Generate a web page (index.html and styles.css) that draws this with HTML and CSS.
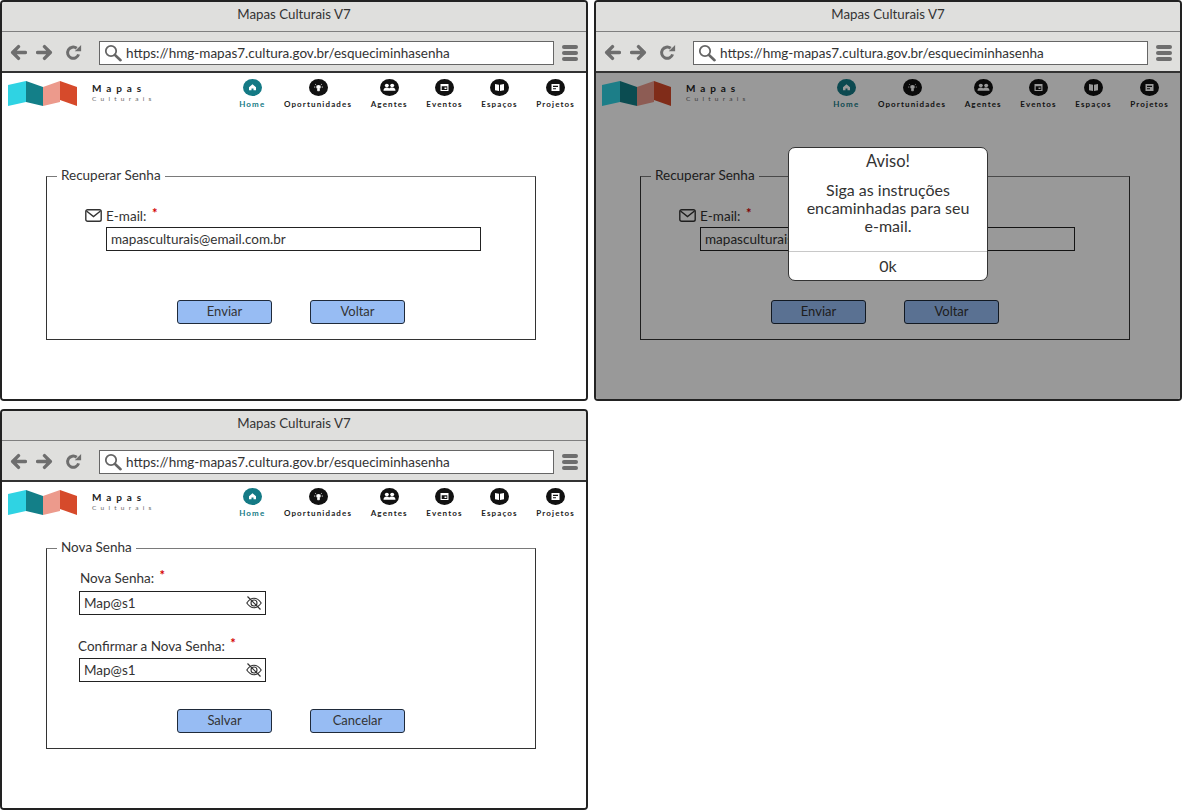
FILE: index.html
```html
<!DOCTYPE html>
<html>
<head lang="pt-BR">
    <meta charset="UTF-8">
    <title>Mapas Culturais V7</title>
    <link rel="stylesheet" href="styles.css">
</head>
<body>
<svg class="sprites" xmlns="http://www.w3.org/2000/svg">
    <symbol id="i-back" viewBox="0 0 16 16"><path d="M14.5 8H3M8 2.5 2.5 8 8 13.5" fill="none" stroke="currentColor" stroke-width="3.2" stroke-linecap="round" stroke-linejoin="round"/></symbol>
    <symbol id="i-forward" viewBox="0 0 16 16"><path d="M1.5 8H13M8 2.500 13.500 8 8 13.500" fill="none" stroke="currentColor" stroke-width="3.2" stroke-linecap="round" stroke-linejoin="round"/></symbol>
    <symbol id="i-reload" viewBox="0 0 16 16"><path d="M12.800 9.800A5.300 5.300 0 1 1 11 4" fill="none" stroke="currentColor" stroke-width="2.800"/><path d="M9.200 6.800h6V1z" fill="currentColor"/></symbol>
    <symbol id="i-search" viewBox="0 0 18 18"><circle cx="7" cy="7" r="5.200" fill="none" stroke="currentColor" stroke-width="1.800"/><path d="M11 11l5.500 5.200" stroke="currentColor" stroke-width="2.600" stroke-linecap="round"/></symbol>
    <symbol id="i-home" viewBox="0 0 19 19" preserveAspectRatio="none"><circle cx="9.500" cy="9.500" r="9.500" fill="currentColor"/><path d="M9.500 6 13 9.200v3.300h-2.500v-2h-2v2H6V9.200z" fill="#fff"/></symbol>
    <symbol id="i-bulb" viewBox="0 0 19 19" preserveAspectRatio="none"><circle cx="9.500" cy="9.500" r="9.500" fill="currentColor"/><circle cx="9.500" cy="9" r="2.300" fill="#fff"/><path d="M8.600 11h1.800v2.200H8.600zM5 9h1.300M12.700 9H14M6.200 5.800l1 1M12.800 5.800l-1 1" stroke="#fff" stroke-width=".8" fill="#fff"/></symbol>
    <symbol id="i-people" viewBox="0 0 19 19" preserveAspectRatio="none"><circle cx="9.500" cy="9.500" r="9.500" fill="currentColor"/><circle cx="6.800" cy="7.300" r="2" fill="#fff"/><circle cx="12.200" cy="7.300" r="2" fill="#fff"/><path d="M3.500 13c0-2.400 1.500-3.400 3.300-3.400 1 0 1.800.3 2.400.9.600-.6 1.500-.9 3-.9 1.800 0 3.300 1 3.300 3.400z" fill="#fff"/></symbol>
    <symbol id="i-calendar" viewBox="0 0 19 19" preserveAspectRatio="none"><circle cx="9.500" cy="9.500" r="9.500" fill="currentColor"/><path d="M5.500 5.500h8v8h-8zM6.700 8.200v4.100h5.600V8.200z" fill="#fff" fill-rule="evenodd"/><path d="M9.500 9.500h2v1.800h-2z" fill="#fff"/></symbol>
    <symbol id="i-map" viewBox="0 0 19 19" preserveAspectRatio="none"><circle cx="9.500" cy="9.500" r="9.500" fill="currentColor"/><path d="M5 5.500 9 6.300V13.500l-4-.8zM10 6.300l4-.8V12.700l-4 .8z" fill="#fff"/></symbol>
    <symbol id="i-project" viewBox="0 0 19 19" preserveAspectRatio="none"><circle cx="9.500" cy="9.500" r="9.500" fill="currentColor"/><path d="M5.500 5.500h8v8h-8zM7 7.500V9h5V7.500zM7 10.300v1.200h3v-1.200z" fill="#fff" fill-rule="evenodd"/></symbol>
    <symbol id="i-mail" viewBox="0 0 17 13"><rect x=".8" y=".8" width="15.400" height="11.400" rx="1.800" fill="none" stroke="currentColor" stroke-width="1.400"/><path d="M1.500 2 8.500 7.500 15.500 2" fill="none" stroke="currentColor" stroke-width="1.400"/></symbol>
    <symbol id="i-eye" viewBox="0 0 16 16"><path d="M.8 8C3 4.800 5.300 3.300 8 3.300s5 1.500 7.200 4.700C13 11.200 10.700 12.700 8 12.700S3 11.200.8 8z" fill="none" stroke="currentColor" stroke-width="1.100"/><circle cx="8" cy="8" r="3" fill="none" stroke="currentColor" stroke-width="1.100"/><path d="M1.500 1.500l13 13" stroke="currentColor" stroke-width="1.200"/></symbol>
    <symbol id="i-logo" viewBox="0 0 69 25"><path d="M0 4 18 0V21L0 25z" fill="#2fd3e3"/><path d="M18 0 35 6V25L18 21z" fill="#137f88"/><path d="M35 6 52 0V21L35 25z" fill="#ec9a8c"/><path d="M52 0 69 6V25L52 19z" fill="#d64a2b"/></symbol>
</svg>

<div class="desktop">

    <div class="window">
        <div class="titlebar">Mapas Culturais V7</div>
        <div class="toolbar">
            <svg class="tool-btn"><use href="#i-back"/></svg>
            <svg class="tool-btn"><use href="#i-forward"/></svg>
            <svg class="tool-btn tool-reload"><use href="#i-reload"/></svg>
            <div class="urlbar">
                <svg class="search-icon"><use href="#i-search"/></svg>
                <span>https://hmg-mapas7.cultura.gov.br/esqueciminhasenha</span>
            </div>
            <div class="menu-btn"><i></i><i></i><i></i></div>
        </div>
        <div class="viewport">
            <div class="navbar">
                <svg class="logo"><use href="#i-logo"/></svg>
                <div class="brand">
                    <div class="brand-name">Mapas</div>
                    <div class="brand-sub">Culturais</div>
                </div>
                <ul class="nav">
                    <li class="active"><svg><use href="#i-home"/></svg>Home</li>
                    <li><svg><use href="#i-bulb"/></svg>Oportunidades</li>
                    <li><svg><use href="#i-people"/></svg>Agentes</li>
                    <li><svg><use href="#i-calendar"/></svg>Eventos</li>
                    <li><svg><use href="#i-map"/></svg>Espaços</li>
                    <li><svg><use href="#i-project"/></svg>Projetos</li>
                </ul>
            </div>
            <fieldset class="panel panel-recover">
                <legend>Recuperar Senha</legend>
                <div class="mail-field">
                    <svg class="mail-icon"><use href="#i-mail"/></svg>
                    <div class="mail-col">
                        <label class="field-label">E-mail: <b class="req">*</b></label>
                        <div class="input input-wide">mapasculturais@email.com.br</div>
                    </div>
                </div>
                <div class="actions">
                    <button class="btn">Enviar</button>
                    <button class="btn">Voltar</button>
                </div>
            </fieldset>
        </div>
    </div>

    <div class="window">
        <div class="titlebar">Mapas Culturais V7</div>
        <div class="toolbar">
            <svg class="tool-btn"><use href="#i-back"/></svg>
            <svg class="tool-btn"><use href="#i-forward"/></svg>
            <svg class="tool-btn tool-reload"><use href="#i-reload"/></svg>
            <div class="urlbar">
                <svg class="search-icon"><use href="#i-search"/></svg>
                <span>https://hmg-mapas7.cultura.gov.br/esqueciminhasenha</span>
            </div>
            <div class="menu-btn"><i></i><i></i><i></i></div>
        </div>
        <div class="viewport">
            <div class="navbar">
                <svg class="logo"><use href="#i-logo"/></svg>
                <div class="brand">
                    <div class="brand-name">Mapas</div>
                    <div class="brand-sub">Culturais</div>
                </div>
                <ul class="nav">
                    <li class="active"><svg><use href="#i-home"/></svg>Home</li>
                    <li><svg><use href="#i-bulb"/></svg>Oportunidades</li>
                    <li><svg><use href="#i-people"/></svg>Agentes</li>
                    <li><svg><use href="#i-calendar"/></svg>Eventos</li>
                    <li><svg><use href="#i-map"/></svg>Espaços</li>
                    <li><svg><use href="#i-project"/></svg>Projetos</li>
                </ul>
            </div>
            <fieldset class="panel panel-recover">
                <legend>Recuperar Senha</legend>
                <div class="mail-field">
                    <svg class="mail-icon"><use href="#i-mail"/></svg>
                    <div class="mail-col">
                        <label class="field-label">E-mail: <b class="req">*</b></label>
                        <div class="input input-wide">mapasculturais@email.com.br</div>
                    </div>
                </div>
                <div class="actions">
                    <button class="btn">Enviar</button>
                    <button class="btn">Voltar</button>
                </div>
            </fieldset>
            <div class="overlay">
                <div class="modal">
                    <div class="modal-title">Aviso!</div>
                    <div class="modal-text">Siga as instruções encaminhadas para seu e&#8209;mail.</div>
                    <div class="modal-ok">0k</div>
                </div>
            </div>
        </div>
    </div>

    <div class="window">
        <div class="titlebar">Mapas Culturais V7</div>
        <div class="toolbar">
            <svg class="tool-btn"><use href="#i-back"/></svg>
            <svg class="tool-btn"><use href="#i-forward"/></svg>
            <svg class="tool-btn tool-reload"><use href="#i-reload"/></svg>
            <div class="urlbar">
                <svg class="search-icon"><use href="#i-search"/></svg>
                <span>https://hmg-mapas7.cultura.gov.br/esqueciminhasenha</span>
            </div>
            <div class="menu-btn"><i></i><i></i><i></i></div>
        </div>
        <div class="viewport">
            <div class="navbar">
                <svg class="logo"><use href="#i-logo"/></svg>
                <div class="brand">
                    <div class="brand-name">Mapas</div>
                    <div class="brand-sub">Culturais</div>
                </div>
                <ul class="nav">
                    <li class="active"><svg><use href="#i-home"/></svg>Home</li>
                    <li><svg><use href="#i-bulb"/></svg>Oportunidades</li>
                    <li><svg><use href="#i-people"/></svg>Agentes</li>
                    <li><svg><use href="#i-calendar"/></svg>Eventos</li>
                    <li><svg><use href="#i-map"/></svg>Espaços</li>
                    <li><svg><use href="#i-project"/></svg>Projetos</li>
                </ul>
            </div>
            <fieldset class="panel panel-new">
                <legend>Nova Senha</legend>
                <div class="pass-field">
                    <label class="field-label">Nova Senha: <b class="req">*</b></label>
                    <div class="input input-pass">Map@s1<svg class="eye"><use href="#i-eye"/></svg></div>
                </div>
                <div class="pass-field pass-confirm">
                    <label class="field-label">Confirmar a Nova Senha: <b class="req">*</b></label>
                    <div class="input input-pass">Map@s1<svg class="eye"><use href="#i-eye"/></svg></div>
                </div>
                <div class="actions actions-new">
                    <button class="btn">Salvar</button>
                    <button class="btn">Cancelar</button>
                </div>
            </fieldset>
        </div>
    </div>

</div>
</body>
</html>
```

FILE: styles.css
```css
*{
    margin: 0;
    padding: 0;
    box-sizing: border-box;
}
html, body{
    background: #ffffff;
}
body{
    font-family: Lato, "Noto Sans", sans-serif;
    color: #333333;
    font-size: 13.500px;
}
li{
    list-style: none;
}
.sprites{
    position: absolute;
    width: 0;
    height: 0;
}

.desktop{
    display: grid;
    grid-template-columns: 588px 588px;
    grid-template-rows: 401px 401px;
    gap: 8px 6px;
    width: 1182px;
    height: 810px;
}
.window{
    display: flex;
    flex-direction: column;
    border: 2px solid #222222;
    border-radius: 4px;
    overflow: hidden;
}

.titlebar{
    height: 30px;
    flex: none;
    background: #dfdfdd;
    border-bottom: 1px solid #7f7f7f;
    text-align: center;
    line-height: 25px;
    font-size: 13.300px;
}
.toolbar{
    height: 41px;
    flex: none;
    display: flex;
    align-items: center;
    padding: 2px 8px 0;
    background: #dfdfdd;
    border-bottom: 2px solid #333333;
}
.tool-btn{
    width: 17px;
    height: 17px;
    margin-right: 9px;
    color: #6e6e6e;
}
.tool-btn + .tool-btn{
    margin-right: 12px;
}
.tool-reload{
    margin-right: 0 !important;
}
.urlbar{
    display: flex;
    align-items: center;
    width: 455px;
    height: 24px;
    margin-left: 17px;
    padding-left: 4px;
    background: #ffffff;
    border: 1px solid #666666;
    white-space: nowrap;
    font-size: 13.500px;
}
.search-icon{
    width: 18px;
    height: 18px;
    margin-right: 4px;
    color: #666666;
}
.menu-btn{
    display: flex;
    flex-direction: column;
    gap: 2px;
    margin-left: 8px;
}
.menu-btn i{
    display: block;
    width: 16px;
    height: 4px;
    border-radius: 2px;
    background: #6e6e6e;
}

.viewport{
    position: relative;
    flex: 1;
    background: #ffffff;
}
.navbar{
    display: flex;
    height: 36px;
    padding-left: 6px;
}
.logo{
    width: 69px;
    height: 25px;
    margin-top: 8px;
}
.brand{
    margin-left: 15px;
    padding-top: 9px;
    width: 80px;
}
.brand-name{
    font-size: 10px;
    line-height: 13px;
    letter-spacing: 4.900px;
    color: #222222;
    font-weight: 700;
}
.brand-sub{
    font-size: 6.500px;
    line-height: 8px;
    letter-spacing: 4.250px;
    color: #666666;
}
.nav{
    display: flex;
    gap: 18.600px;
    margin-left: auto;
    padding: 6px 11px 0 0;
}
.nav li{
    display: flex;
    flex-direction: column;
    align-items: center;
    font-size: 8px;
    font-weight: 700;
    letter-spacing: 1.130px;
    line-height: 10px;
    color: #222222;
}
.nav svg{
    width: 19px;
    height: 17px;
    margin-bottom: 3px;
    color: #111111;
}
.nav .active{
    color: #147a85;
}
.nav .active svg{
    color: #147a85;
}

.panel{
    margin-left: 44px;
    width: 490px;
    border: 1px solid #333333;
    border-top-color: #7a7a7a;
}
.panel legend{
    margin-left: 10px;
    padding: 0 4px 2px;
    font-size: 13.500px;
    line-height: 14px;
}
.panel-recover{
    height: 172px;
    margin-top: 59px;
}
.panel-new{
    height: 209px;
    margin-top: 22px;
}

.mail-field{
    display: flex;
    padding: 23px 0 0 38px;
}
.mail-icon{
    width: 17px;
    height: 13px;
    margin: 2px 4px 0 0;
    color: #333333;
}
.field-label{
    display: block;
    font-size: 13.500px;
    line-height: 18px;
}
.req{
    position: relative;
    top: -3px;
    margin-left: 2px;
    font-size: 13px;
    color: #d40000;
}
.input{
    display: flex;
    align-items: center;
    height: 24px;
    padding-left: 4px;
    background: transparent;
    border: 1px solid #222222;
    font-size: 13.500px;
}
.input-wide{
    width: 375px;
    margin-top: 2px;
}
.input-pass{
    width: 187px;
    margin-top: 4px;
}
.eye{
    width: 16px;
    height: 16px;
    margin-left: auto;
    margin-right: 3px;
    color: #333333;
}

.pass-field{
    padding: 13px 0 0 32px;
}
.pass-field .field-label{
    padding-left: 1px;
}
.pass-confirm{
    padding-top: 22px;
}
.pass-confirm .field-label{
    margin-left: -2px;
}
.pass-confirm .input-pass{
    margin-top: 3px;
}

.actions{
    display: flex;
    gap: 38px;
    padding: 49px 0 0 130px;
}
.actions-new{
    padding-top: 27px;
}
.btn{
    width: 95px;
    height: 24px;
    padding-bottom: 3px;
    background: #97bcf3;
    border: 1px solid #1f2a3a;
    border-radius: 3px;
    font-family: inherit;
    font-size: 13px;
    color: #333333;
}

.overlay{
    position: absolute;
    top: 0;
    left: 0;
    right: 0;
    bottom: 0;
    display: flex;
    justify-content: center;
    align-items: flex-start;
    padding-top: 74px;
    background: rgba(0, 0, 0, .4);
}
.modal{
    width: 200px;
    height: 134px;
    background: #ffffff;
    border: 1px solid #333333;
    border-radius: 7px;
    text-align: center;
}
.modal-title{
    padding-top: 3px;
    font-size: 16.500px;
    line-height: 20px;
}
.modal-text{
    padding: 10px 10px 0;
    height: 81px;
    border-bottom: 1px solid #c8c8c8;
    font-size: 16px;
    line-height: 18px;
}
.modal-ok{
    font-size: 16px;
    line-height: 28px;
}
```
